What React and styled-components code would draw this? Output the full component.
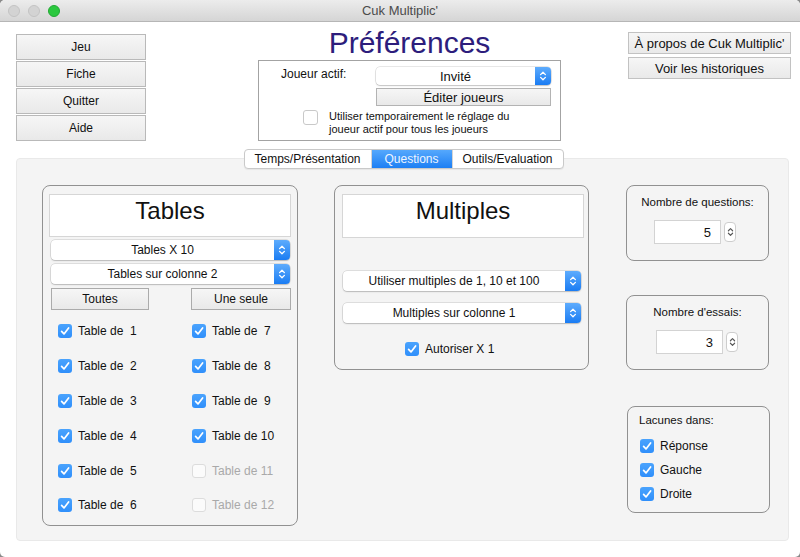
import React from "react"
import styled, { createGlobalStyle } from "styled-components"

const GlobalStyle = createGlobalStyle`
  html, body {
    margin: 0;
    padding: 0;
    background: #8a8a8a;
  }
  body {
    font-family: "Liberation Sans", Arial, sans-serif;
    font-size: 12px;
    color: #111;
  }
`

const Window = styled.div`
  width: 800px;
  height: 557px;
  background: #fff;
  border-radius: 5px;
  overflow: hidden;
  display: flex;
  flex-direction: column;
`

const TitleBar = styled.div`
  height: 22px;
  box-sizing: border-box;
  flex-shrink: 0;
  background: linear-gradient(#ececec, #d5d5d5);
  border-bottom: 1px solid #b6b6b6;
  display: flex;
  align-items: center;
`

const Lights = styled.div`
  display: flex;
  gap: 8px;
  padding-left: 8px;
`

const Light = styled.span`
  width: 12px;
  height: 12px;
  box-sizing: border-box;
  border-radius: 50%;
  background: ${({ $color }) => $color};
  border: 1px solid ${({ $edge }) => $edge};
`

const WindowTitle = styled.div`
  flex: 1;
  text-align: center;
  font-size: 13px;
  color: #4b4b4b;
  margin-right: 60px;
`

const Top = styled.div`
  height: 127px;
  display: flex;
  align-items: flex-start;
  flex-shrink: 0;
`

const NavColumn = styled.div`
  width: 130px;
  margin: 12px 0 0 16px;
  display: flex;
  flex-direction: column;
  gap: 1px;
`

const PushButton = styled.div`
  box-sizing: border-box;
  width: ${({ $w }) => ($w ? `${$w}px` : "100%")};
  height: ${({ $h }) => $h || 26}px;
  border: 1px solid ${({ $edge }) => $edge || "#b9b9b9"};
  background: linear-gradient(#f6f6f6, #e9e9e9);
  display: flex;
  align-items: center;
  justify-content: center;
  font-size: ${({ $size }) => $size || 12}px;
  color: #111;
`

const Center = styled.div`
  width: 303px;
  margin-left: 112px;
  display: flex;
  flex-direction: column;
  align-items: stretch;
`

const Heading = styled.h1`
  margin: 6px 0 2px;
  font-weight: normal;
  font-size: 30px;
  line-height: 30px;
  text-align: center;
  color: #2d1d7c;
`

const PlayerBox = styled.div`
  box-sizing: border-box;
  height: 81px;
  border: 1px solid #a3a3a3;
  padding: 6px 9px 0 0;
  display: flex;
  flex-direction: column;
`

const PlayerRow = styled.div`
  display: flex;
`

const PlayerLabel = styled.div`
  width: 117px;
  padding-left: 22px;
  box-sizing: border-box;
  line-height: 14px;
`

const PlayerControls = styled.div`
  width: 175px;
  display: flex;
  flex-direction: column;
  gap: 3px;
`

const ShareRow = styled.div`
  display: flex;
  align-items: flex-start;
  gap: 11px;
  margin: 4px 0 0 44px;
`

const ShareText = styled.div`
  font-size: 11px;
  line-height: 13px;
`

const AsideColumn = styled.div`
  width: 163px;
  margin: 10px 0 0 67px;
  display: flex;
  flex-direction: column;
  gap: 3px;
`

const TabsRow = styled.div`
  display: flex;
  justify-content: center;
  padding-left: 7px;
  margin-bottom: -11px;
  position: relative;
  z-index: 1;
`

const Tabs = styled.div`
  display: flex;
  height: 20px;
  box-sizing: border-box;
  border: 1px solid #c9c9c9;
  border-radius: 4px;
  background: #fff;
  overflow: hidden;
  box-shadow: 0 1px 1px rgba(0, 0, 0, 0.06);
`

const Tab = styled.div`
  width: ${({ $w }) => $w}px;
  display: flex;
  align-items: center;
  justify-content: center;
  font-size: 12px;
  color: ${({ $active }) => ($active ? "#eef5ff" : "#111")};
  background: ${({ $active }) =>
    $active ? "linear-gradient(#55a8fd, #1d7ff4)" : "transparent"};
  & + & {
    border-left: 1px solid #d4d4d4;
  }
`

const Panel = styled.div`
  box-sizing: border-box;
  height: 383px;
  margin: 0 11px 0 16px;
  background: #f4f4f4;
  border: 1px solid #e9e9e9;
  border-radius: 4px;
  padding: 26px 0 0 25px;
  display: flex;
  align-items: flex-start;
`

const Group = styled.div`
  box-sizing: border-box;
  width: ${({ $w }) => $w}px;
  height: ${({ $h }) => $h}px;
  border: 1px solid #919191;
  border-radius: 8px;
  flex-shrink: 0;
`

const TablesGroup = styled(Group)`
  padding: 8px 6px 0;
  display: flex;
  flex-direction: column;
`

const MultiplesGroup = styled(Group)`
  margin-left: 36px;
  padding: 8px 4px 0 7px;
  display: flex;
  flex-direction: column;
`

const TitleBox = styled.div`
  box-sizing: border-box;
  height: ${({ $h }) => $h || 43}px;
  background: #fff;
  border: 1px solid #d6d6d6;
  display: flex;
  justify-content: center;
  padding-top: 3px;
  font-size: 24px;
  line-height: 26px;
  color: #111;
`

const SelectBox = styled.div`
  height: ${({ $h }) => $h || 20}px;
  margin: ${({ $m }) => $m || "0"};
  flex-shrink: 0;
  display: flex;
  background: #fff;
  border-radius: 4px;
  box-shadow: 0 0 0 0.5px rgba(0, 0, 0, 0.18), 0 1px 1.5px rgba(0, 0, 0, 0.16);
`

const SelectText = styled.div`
  flex: 1;
  display: flex;
  align-items: center;
  justify-content: center;
  font-size: ${({ $size }) => $size || 12}px;
`

const SelectArrows = styled.div`
  width: 16px;
  border-radius: 0 4px 4px 0;
  background: linear-gradient(#5eacfd, #1a7cf3);
  display: flex;
  align-items: center;
  justify-content: center;
`

const ButtonPair = styled.div`
  display: flex;
  justify-content: space-between;
  margin: 4px 0 0 2px;
`

const CheckGrid = styled.div`
  display: grid;
  grid-template-columns: 134px 1fr;
  grid-template-rows: repeat(6, 34.8px);
  grid-auto-flow: column;
  margin: 4px 0 0 9px;
`

const CheckItem = styled.label`
  display: flex;
  align-items: center;
  gap: 6px;
  font-size: 12px;
  color: ${({ $off }) => ($off ? "#a9a9a9" : "#111")};
  white-space: pre;
  height: ${({ $h }) => ($h ? `${$h}px` : "auto")};
  margin: ${({ $m }) => $m || "0"};
`

const Box = styled.span`
  width: 14px;
  height: 14px;
  box-sizing: border-box;
  border-radius: 3px;
  flex-shrink: 0;
  display: flex;
  align-items: center;
  justify-content: center;
  background: ${({ $on }) => ($on ? "linear-gradient(#4aa3fd, #2f8ffb)" : "#fbfbfb")};
  border: ${({ $on }) => ($on ? "none" : "1px solid #dcdcdc")};
`

const LargeBox = styled(Box)`
  width: 15px;
  height: 15px;
  border-color: #c9c9c9;
  background: #fff;
`

const SideColumn = styled.div`
  margin-left: 37px;
  display: flex;
  flex-direction: column;
`

const CounterGroup = styled(Group)`
  margin-top: ${({ $mt }) => $mt || 0}px;
  display: flex;
  flex-direction: column;
  align-items: center;
  padding-top: 8px;
`

const GroupLabel = styled.div`
  font-size: 11.5px;
  line-height: 16px;
`

const CounterRow = styled.div`
  display: flex;
  align-items: center;
  gap: 3px;
  margin-top: 10px;
  align-self: flex-start;
  margin-left: ${({ $ml }) => $ml}px;
`

const NumberField = styled.div`
  box-sizing: border-box;
  width: 67px;
  height: 24px;
  background: #fff;
  border: 1px solid #d3d3d3;
  display: flex;
  align-items: center;
  justify-content: flex-end;
  padding-right: 9px;
  font-size: 13px;
`

const Stepper = styled.div`
  box-sizing: border-box;
  width: 12px;
  height: 20px;
  background: #fff;
  border: 1px solid #cdcdcd;
  border-radius: 4px;
  display: flex;
  align-items: center;
  justify-content: center;
`

const LacunesGroup = styled(Group)`
  margin: 36px 0 0 1px;
  padding: 5px 0 0 11px;
  display: flex;
  flex-direction: column;
`

const Arrows = ({ color = "#fff", w = 8, h = 12 }) => (
  <svg width={w} height={h} viewBox="0 0 8 12">
    <path
      d="M1.6 4.6 L4 2.2 L6.4 4.6 M1.6 7.4 L4 9.8 L6.4 7.4"
      fill="none"
      stroke={color}
      strokeWidth="1.3"
      strokeLinecap="round"
      strokeLinejoin="round"
    />
  </svg>
)

const Tick = () => (
  <svg width="14" height="14" viewBox="0 0 14 14">
    <path
      d="M3.6 7.4 L6 9.9 L10.6 3.9"
      fill="none"
      stroke="#fff"
      strokeWidth="1.7"
      strokeLinecap="round"
      strokeLinejoin="round"
    />
  </svg>
)

const Select = ({ label, m, h, size }) => (
  <SelectBox $m={m} $h={h}>
    <SelectText $size={size}>{label}</SelectText>
    <SelectArrows>
      <Arrows />
    </SelectArrows>
  </SelectBox>
)

const Check = ({ label, on = true, m, h }) => (
  <CheckItem $off={!on} $m={m} $h={h}>
    <Box $on={on}>{on && <Tick />}</Box>
    {label}
  </CheckItem>
)

const Counter = ({ label, value, mt, ml }) => (
  <CounterGroup $w={143} $h={mt ? 75 : 76} $mt={mt}>
    <GroupLabel>{label}</GroupLabel>
    <CounterRow $ml={ml}>
      <NumberField>{value}</NumberField>
      <Stepper>
        <Arrows color="#555" w={7} h={12} />
      </Stepper>
    </CounterRow>
  </CounterGroup>
)

const tables = [1, 2, 3, 4, 5, 6, 7, 8, 9, 10, 11, 12]

export default function App() {
  return (
    <>
      <GlobalStyle />
      <Window>
        <TitleBar>
          <Lights>
            <Light $color="#d3d3d3" $edge="#c3c3c3" />
            <Light $color="#d3d3d3" $edge="#c3c3c3" />
            <Light $color="#2bc83f" $edge="#22a834" />
          </Lights>
          <WindowTitle>Cuk Multiplic'</WindowTitle>
        </TitleBar>

        <Top>
          <NavColumn>
            <PushButton>Jeu</PushButton>
            <PushButton>Fiche</PushButton>
            <PushButton>Quitter</PushButton>
            <PushButton>Aide</PushButton>
          </NavColumn>

          <Center>
            <Heading>Préférences</Heading>
            <PlayerBox>
              <PlayerRow>
                <PlayerLabel>Joueur actif:</PlayerLabel>
                <PlayerControls>
                  <Select label="Invité" h={18} size={13} />
                  <PushButton $h={18} $size={13} $edge="#b3b3b3">
                    Éditer joueurs
                  </PushButton>
                </PlayerControls>
              </PlayerRow>
              <ShareRow>
                <LargeBox />
                <ShareText>
                  Utiliser temporairement le réglage du
                  <br />
                  joueur actif pour tous les joueurs
                </ShareText>
              </ShareRow>
            </PlayerBox>
          </Center>

          <AsideColumn>
            <PushButton $h={22} $size={13} $edge="#c2c2c2">
              À propos de Cuk Multiplic'
            </PushButton>
            <PushButton $h={22} $size={13} $edge="#c2c2c2">
              Voir les historiques
            </PushButton>
          </AsideColumn>
        </Top>

        <TabsRow>
          <Tabs>
            <Tab $w={126}>Temps/Présentation</Tab>
            <Tab $w={80} $active>
              Questions
            </Tab>
            <Tab $w={110}>Outils/Evaluation</Tab>
          </Tabs>
        </TabsRow>

        <Panel>
          <TablesGroup $w={256} $h={341}>
            <TitleBox>Tables</TitleBox>
            <Select label="Tables X 10" m="3px 1px 0 2px" />
            <Select label="Tables sur colonne 2" m="4px 1px 0 2px" />
            <ButtonPair>
              <PushButton $w={98} $h={22} $edge="#ababab">
                Toutes
              </PushButton>
              <PushButton $w={100} $h={22} $edge="#ababab">
                Une seule
              </PushButton>
            </ButtonPair>
            <CheckGrid>
              {tables.map((n) => (
                <Check
                  key={n}
                  on={n <= 10}
                  label={n < 10 ? `Table de  ${n}` : `Table de ${n}`}
                />
              ))}
            </CheckGrid>
          </TablesGroup>

          <MultiplesGroup $w={255} $h={185}>
            <TitleBox $h={44}>Multiples</TitleBox>
            <Select label="Utiliser multiples de 1, 10 et 100" m="33px 3px 0 1px" />
            <Select label="Multiples sur colonne 1" m="12px 3px 0 1px" />
            <Check label="Autoriser X 1" m="19px 0 0 63px" h={14} />
          </MultiplesGroup>

          <SideColumn>
            <Counter label="Nombre de questions:" value="5" ml={27} />
            <Counter label="Nombre d'essais:" value="3" mt={34} ml={29} />
            <LacunesGroup $w={143} $h={107}>
              <GroupLabel>Lacunes dans:</GroupLabel>
              <Check label="Réponse" m="11px 0 0 1px" h={14} />
              <Check label="Gauche" m="10px 0 0 1px" h={14} />
              <Check label="Droite" m="10px 0 0 1px" h={14} />
            </LacunesGroup>
          </SideColumn>
        </Panel>
      </Window>
    </>
  )
}
